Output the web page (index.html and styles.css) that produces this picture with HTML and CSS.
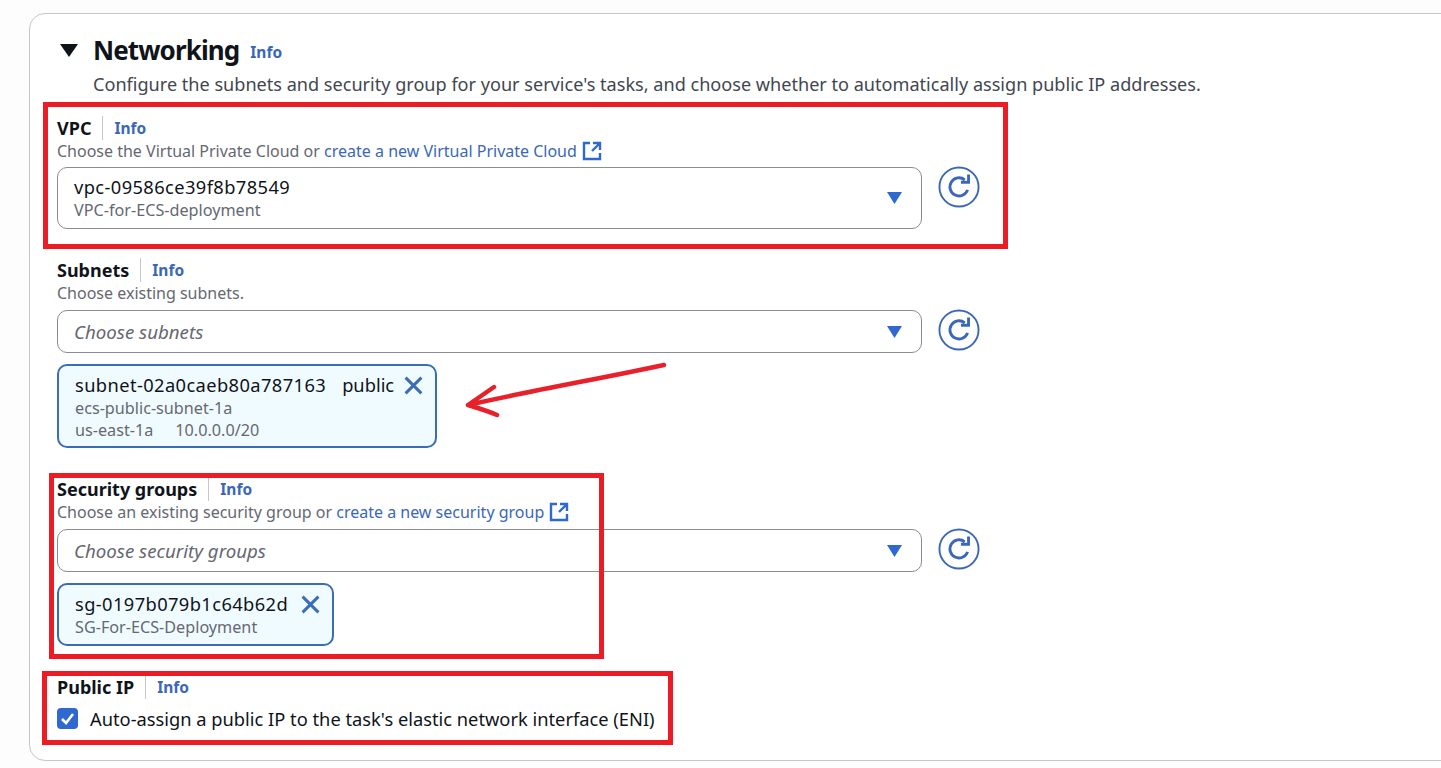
FILE: index.html
```html
<!DOCTYPE html>
<html lang="en">
<head>
<meta charset="utf-8">
<title>Networking</title>
<link rel="stylesheet" href="styles.css">
</head>
<body>
<section class="card">
  <header class="head">
    <svg class="caret" viewBox="0 0 18 13"><path d="M0 0H18L9 13Z"/></svg>
    <h2>Networking</h2>
    <a class="info big">Info</a>
  </header>
  <p class="desc">Configure the subnets and security group for your service's tasks, and choose whether to automatically assign public IP addresses.</p>

  <div class="field f-vpc">
    <div class="label"><b>VPC</b><a class="info">Info</a></div>
    <div class="hint">Choose the Virtual Private Cloud or <a>create a new Virtual Private Cloud</a>
      <svg class="ext" viewBox="0 0 20 20"><path d="M8 2H2V18H18V12M11 2H18V9M18 2L10 10"/></svg></div>
    <div class="row">
      <div class="select tall"><div><div class="val id">vpc-09586ce39f8b78549</div><div class="sub">VPC-for-ECS-deployment</div></div>
        <svg class="arrow" viewBox="0 0 14 11"><path d="M0 0H14L7 11Z"/></svg></div>
      <svg class="refresh" viewBox="0 0 44 44"><circle cx="22" cy="22" r="20.5"/><path d="M31 25A9.500 9.500 0 1 1 28 14.500M32 9V17H24"/></svg>
    </div>
  </div>

  <div class="field f-sub">
    <div class="label"><b>Subnets</b><a class="info">Info</a></div>
    <div class="hint">Choose existing subnets.</div>
    <div class="row">
      <div class="select"><i>Choose subnets</i><svg class="arrow" viewBox="0 0 14 11"><path d="M0 0H14L7 11Z"/></svg></div>
      <svg class="refresh" viewBox="0 0 44 44"><circle cx="22" cy="22" r="20.5"/><path d="M31 25A9.500 9.500 0 1 1 28 14.500M32 9V17H24"/></svg>
    </div>
    <div class="token t-subnet">
      <div class="t-top"><span class="val"><span class="id">subnet-02a0caeb80a787163</span><span class="tag">public</span></span>
        <svg class="x" viewBox="0 0 18 18"><path d="M1.500 1.500L16.500 16.500M16.500 1.500L1.500 16.500"/></svg></div>
      <div class="sub">ecs-public-subnet-1a</div>
      <div class="sub">us-east-1a<span class="tag2">10.0.0.0/20</span></div>
    </div>
  </div>

  <div class="field f-sg">
    <div class="label"><b>Security groups</b><a class="info">Info</a></div>
    <div class="hint">Choose an existing security group or <a>create a new security group</a>
      <svg class="ext" viewBox="0 0 20 20"><path d="M8 2H2V18H18V12M11 2H18V9M18 2L10 10"/></svg></div>
    <div class="row">
      <div class="select"><i>Choose security groups</i><svg class="arrow" viewBox="0 0 14 11"><path d="M0 0H14L7 11Z"/></svg></div>
      <svg class="refresh" viewBox="0 0 44 44"><circle cx="22" cy="22" r="20.500"/><path d="M31 25A9.500 9.500 0 1 1 28 14.500M32 9V17H24"/></svg>
    </div>
    <div class="token t-sg">
      <div class="t-top"><span class="val id">sg-0197b079b1c64b62d</span>
        <svg class="x" viewBox="0 0 18 18"><path d="M1.500 1.500L16.500 16.500M16.500 1.500L1.500 16.500"/></svg></div>
      <div class="sub">SG-For-ECS-Deployment</div>
    </div>
  </div>

  <div class="field f-ip">
    <div class="label"><b>Public IP</b><a class="info">Info</a></div>
    <label class="check">
      <svg class="box" viewBox="0 0 21 21"><rect width="21" height="21" rx="4"/><path d="M5 11L9 15L16 6"/></svg>
      <span>Auto-assign a public IP to the task's elastic network interface (ENI)</span>
    </label>
  </div>
</section>

<div class="mark m-vpc"></div>
<div class="mark m-sg"></div>
<div class="mark m-ip"></div>
<svg class="scrawl" viewBox="0 0 210 60"><path d="M200 3C150 14 60 30 4 43M4 43L30 25M4 43C14 46 24 49 33 53"/></svg>
</body>
</html>
```
FILE: styles.css
```css
* { box-sizing: border-box; }
html, body { margin: 0; height: 768px; overflow: hidden; }
body {
  position: relative;
  background: #fdfdfd;
  padding: 13px 0 0 29px;
  font-family: "Noto Sans", "Open Sans", sans-serif;
  color: #0f141a;
}
a { color: #3a67b8; }

.card {
  width: 1440px;
  height: 748px;
  background: #fff;
  border: 1px solid #c6c6cd;
  border-radius: 16px;
  padding: 0 0 0 27px;
}

.head { display: flex; align-items: center; height: 46px; margin-top: 13px; padding-left: 3px; }
.caret { width: 18px; height: 13px; fill: #0f141a; margin-right: 15px; }
h2 { margin: 0; font-size: 26px; font-weight: 700; line-height: 46px; letter-spacing: -0.9px; }
.info { font-weight: 700; font-size: 15.500px; }
.info.big { margin: 4px 0 0 11px; }
.desc { margin: 0; padding-left: 36px; font-size: 18.100px; line-height: 22px; color: #414750; white-space: nowrap; }

.field { width: 930px; }
.f-vpc { margin-top: 21px; }
.f-sub { margin-top: 29px; }
.f-sg { margin-top: 29px; }
.f-ip { margin-top: 29px; }

.label { display: flex; align-items: center; height: 23px; font-size: 18px; }
.label b { padding-right: 11px; border-right: 1px solid #c6c6cd; line-height: 24px; }
.label .info { margin-left: 11px; }
.hint { display: flex; align-items: center; height: 23px; font-size: 16px; color: #656871; white-space: pre; }
.ext { width: 20px; height: 20px; margin-left: 5px; fill: none; stroke: #2f69d0; stroke-width: 2.4; }

.row { display: flex; align-items: flex-start; gap: 16px; margin-top: 6px; }
.f-vpc .row { margin-top: 5px; }
.select {
  width: 865px; height: 43px;
  display: flex; align-items: center; justify-content: space-between;
  padding: 0 19px 0 16px;
  border: 1px solid #8c8c94;
  border-radius: 10px;
  background: #fff;
  font-size: 18.700px;
}
.select.tall { height: 62px; }
.select i { color: #656871; }
.arrow { width: 15px; height: 12px; fill: #2f69d0; }
.refresh { width: 42px; height: 42px; fill: none; stroke: #3a67b8; stroke-width: 2; margin-top: -1px; }
.refresh path { stroke-width: 3; }

.val { font-size: 18.300px; line-height: 24px; color: #0f141a; white-space: nowrap; }
.id { letter-spacing: 0.4px; }
.sub { font-size: 16.200px; line-height: 22px; color: #656871; white-space: nowrap; }
.tag { margin-left: 16px; }
.tag2 { margin-left: 22px; }

.token {
  margin-top: 11px;
  padding: 7px 12px 0 16px;
  border: 2px solid #3a6db5;
  border-radius: 10px;
  background: #f0fbff;
}
.t-subnet { width: 380px; height: 84px; }
.t-sg { width: 277px; height: 63px; }
.t-top { display: flex; justify-content: space-between; align-items: center; height: 24px; }
.x { width: 19px; height: 19px; flex: none; fill: none; stroke: #3a6db5; stroke-width: 2.8; }

.check { display: flex; align-items: center; gap: 12px; margin-top: 8px; height: 24px; font-size: 18.300px; white-space: nowrap; }
.box { width: 21px; height: 21px; flex: none; }
.box rect { fill: #2f69d0; }
.box path { fill: none; stroke: #fff; stroke-width: 2.6; }

.mark { position: absolute; border: 5px solid #ed1c24; }
.m-vpc { left: 43px; top: 102px; width: 965px; height: 147px; }
.m-sg { left: 49px; top: 473px; width: 555px; height: 186px; }
.m-ip { left: 42px; top: 671px; width: 631px; height: 74px; }
.scrawl { position: absolute; left: 464px; top: 362px; width: 210px; height: 60px; fill: none; stroke: #e8202b; stroke-width: 4.500; stroke-linecap: round; }
```
